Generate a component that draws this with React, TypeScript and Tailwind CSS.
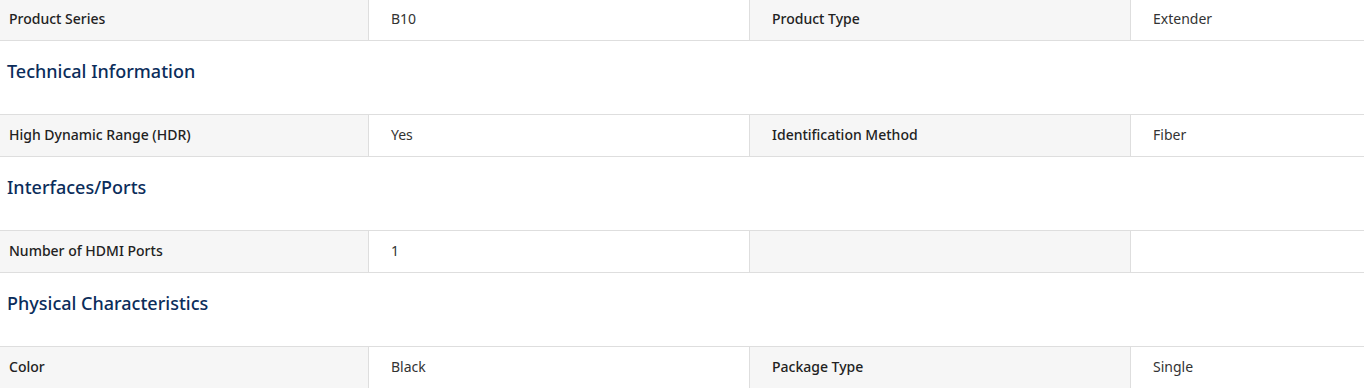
const rows: { title?: string; cells: [string, string, string, string] }[] = [
  { cells: ['Product Series', 'B10', 'Product Type', 'Extender'] },
  { title: 'Technical Information', cells: ['High Dynamic Range (HDR)', 'Yes', 'Identification Method', 'Fiber'] },
  { title: 'Interfaces/Ports', cells: ['Number of HDMI Ports', '1', '', ''] },
  { title: 'Physical Characteristics', cells: ['Color', 'Black', 'Package Type', 'Single'] },
];

function SpecRow({ cells }: { cells: [string, string, string, string] }) {
  const [l1, v1, l2, v2] = cells;
  return (
    <div className="grid h-[42px] grid-cols-[368px_381px_381px_1fr] border-b border-[#dedede] text-[14px] leading-[20px]">
      <div className="flex items-center bg-[#f6f6f6] pb-[2px] pl-[9px] font-medium text-[#222]">{l1}</div>
      <div className="flex items-center border-l border-[#dedede] pb-[2px] pl-[22px] text-[#333]">{v1}</div>
      <div className="flex items-center border-l border-[#dedede] bg-[#f6f6f6] pb-[2px] pl-[22px] font-medium text-[#222]">{l2}</div>
      <div className="flex items-center border-l border-[#dedede] pb-[2px] pl-[22px] text-[#333]">{v2}</div>
    </div>
  );
}

export default function App() {
  return (
    <div className="h-[388px] w-full overflow-hidden bg-white font-['Noto_Sans',sans-serif]">
      <div className="-mt-px">
        {rows.map((row, i) => (
          <div key={i}>
            {row.title && (
              <h3 className="h-[74px] border-b border-[#dedede] pl-[7px] pt-[18px] text-[18px] leading-[24px] font-medium text-[#0b2d5b]">
                {row.title}
              </h3>
            )}
            <SpecRow cells={row.cells} />
          </div>
        ))}
      </div>
    </div>
  );
}
